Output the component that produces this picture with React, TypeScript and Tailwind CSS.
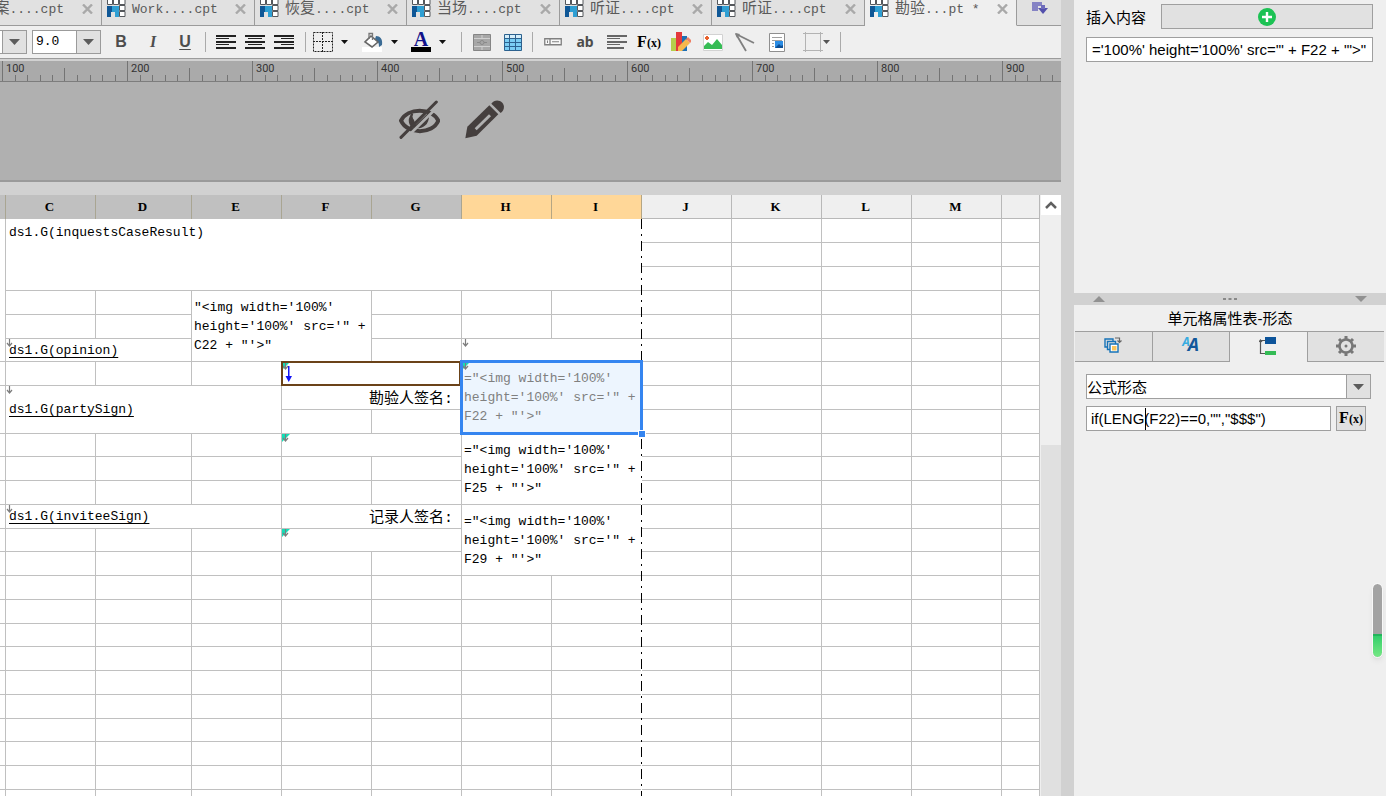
import { useState } from "react";
import type { ReactNode } from "react";
import clsx from "clsx";

/* ---------- data ---------- */

const tabs = [
  { cjk: "案", rest: "....cpt" },
  { cjk: "", rest: "Work....cpt" },
  { cjk: "恢复", rest: "....cpt" },
  { cjk: "当场", rest: "....cpt" },
  { cjk: "听证", rest: "....cpt" },
  { cjk: "听证", rest: "....cpt" },
  { cjk: "勘验", rest: "...pt *" },
];

const rulerMarks = [100, 200, 300, 400, 500, 600, 700, 800, 900];

const columns = ["", "C", "D", "E", "F", "G", "H", "I", "J", "K", "L", "M", ""];

type Cell = {
  span?: number;
  rows?: number;
  text?: string;
  kind?: "top" | "field" | "label" | "formula";
  mark?: "arrow" | "condition";
  state?: "selected" | "parent";
};

const blank = (n: number): Cell[] => Array.from({ length: n }, () => ({}));

const formula = (ref: string, prefix = "=") =>
  `${prefix}"<img width='100%'\nheight='100%' src='" +\n${ref} + "'>"`;

const rows: Cell[][] = [
  [{ rows: 6 }, { span: 7, rows: 3, text: "ds1.G(inquestsCaseResult)", kind: "top" }, ...blank(5)],
  blank(5),
  blank(5),
  [...blank(2), { span: 2, rows: 3, text: formula("C22", ""), kind: "formula" }, ...blank(8)],
  blank(10),
  [
    { span: 2, text: "ds1.G(opinion)", kind: "field", mark: "arrow" },
    {},
    { span: 2, mark: "arrow" },
    ...blank(5),
  ],
  [
    ...blank(4),
    { span: 2, mark: "condition", state: "parent" },
    { span: 2, rows: 3, text: formula("F22"), kind: "formula", mark: "condition", state: "selected" },
    ...blank(5),
  ],
  [
    { rows: 2 },
    { span: 3, rows: 2, text: "ds1.G(partySign)", kind: "field", mark: "arrow" },
    { span: 2, text: "勘验人签名:", kind: "label" },
    ...blank(5),
  ],
  blank(7),
  [
    ...blank(4),
    { span: 2, mark: "condition" },
    { span: 2, rows: 3, text: formula("F25"), kind: "formula" },
    ...blank(5),
  ],
  blank(11),
  blank(11),
  [
    {},
    { span: 3, text: "ds1.G(inviteeSign)", kind: "field", mark: "arrow" },
    { span: 2, text: "记录人签名:", kind: "label" },
    { span: 2, rows: 3, text: formula("F29"), kind: "formula" },
    ...blank(5),
  ],
  [...blank(4), { span: 2, mark: "condition" }, ...blank(5)],
  blank(11),
  ...Array.from({ length: 10 }, () => blank(13)),
];

/* ---------- small icons ---------- */

const ReportIcon = () => (
  <svg width="19" height="17" viewBox="0 0 19 17" className="shrink-0">
    <path d="M.5 0v4.5h5V0M6.500 0v4.500h5V0M12.500 0v4.500h5.500V0M12.500 5.500H18v5h-5.500zM12.500 11.500H18v5h-5.500z" fill="#fff" stroke="#55585c" />
    <path d="M0 6h12v11H8v-5H4v5H0z" fill="#0f5796" />
    <path d="M5 6h7v11H8v-5H5z" fill="#2f9fd3" />
  </svg>
);

const CloseIcon = () => (
  <svg width="11" height="10" viewBox="0 0 11 10" className="shrink-0">
    <path d="M1 .5l9 9M10 .5l-9 9" stroke="#a9a9a9" strokeWidth="2.4" />
  </svg>
);

const Caret = ({ fill = "#111" }: { fill?: string }) => (
  <svg width="7" height="4" viewBox="0 0 7 4" className="shrink-0">
    <path d="M0 0h7L3.500 4z" fill={fill} />
  </svg>
);

const AlignIcon = ({ lines, color = "#222" }: { lines: number[][]; color?: string }) => (
  <svg width="21" height="17" viewBox="0 0 21 17">
    {lines.map(([x, w], i) => (
      <rect key={i} x={x} y={i * 3 + 1} width={w} height={i % 2 ? 1 : 2} fill={color} />
    ))}
  </svg>
);

const BordersIcon = () => (
  <svg width="20" height="20" viewBox="0 0 20 20" fill="none" stroke="#222">
    <path d="M.5.5h19v19H.5z" strokeDasharray="2 1" />
    <path d="M9.500 0v20M0 9.500h20" strokeDasharray="2 1" />
  </svg>
);

const BucketIcon = () => (
  <svg width="21" height="20" viewBox="0 0 21 20">
    <rect y="15" width="20" height="5" fill="#fff" />
    <path d="M14 4c4 0 7 3 6 9l-3 2c0-4-1-6-4-8z" fill="#3a6b94" />
    <path d="M9 4l7 6-6 5-7-5z" fill="#fff" stroke="#666" strokeWidth="1.600" />
    <path d="M7 7V1.500h3.500V8" fill="none" stroke="#777" strokeWidth="1.300" />
  </svg>
);

const FontColorIcon = () => (
  <span className="flex h-5 w-5 flex-col items-center justify-between">
    <span className="h-[15px] font-['Liberation_Serif',serif] text-xl leading-[15px] font-bold text-[#12128a]">A</span>
    <span className="h-[5px] w-full bg-black" />
  </span>
);

const MergeIcon = () => (
  <svg width="18" height="17" viewBox="0 0 18 17">
    <path d="M.5.5h17v16H.5z" fill="#a7a7a7" stroke="#858585" />
    <path d="M1 4.500h16M1 12.500h16M9 1v3M9 13v3" stroke="#d0d0d0" />
    <path d="M4 8.500h3M11 8.500h3" stroke="#8a8a8a" />
    <circle cx="9" cy="8.500" r="2" fill="none" stroke="#8a8a8a" />
  </svg>
);

const GridIcon = () => (
  <svg width="18" height="17" viewBox="0 0 18 17">
    <path d="M.5.5h17v16H.5z" fill="#7bcdf3" stroke="#2d628f" />
    <path d="M1 1h16v3H1z" fill="#d5eefa" />
    <path d="M1 4.500h16M1 8.500h16M1 12.500h16M5.500 1v15M11.500 1v15" stroke="#2d628f" />
  </svg>
);

const TextFieldIcon = () => (
  <svg width="18" height="8" viewBox="0 0 18 8">
    <path d="M.75.75h16.500v6H.75zM6 1v6" fill="#f8f8f8" stroke="#808080" strokeWidth="1.300" />
    <path d="M8 3.750h7M3.500 2.500v2.500" stroke="#808080" />
  </svg>
);

const ChartIcon = () => (
  <svg width="20" height="20" viewBox="0 0 20 20">
    <path d="M0 6h6v13H0z" fill="#b5cf4b" />
    <path d="M11 4h5v15h-5z" fill="#1d6fb5" />
    <path d="M5 0h6v19H5z" fill="#e4393c" />
    <path d="M7 15l8-8 4 4-8 8H7z" fill="#f7b74d" />
    <path d="M15 7l2-2 4 4-2 2z" fill="#ee8065" />
  </svg>
);

const PictureIcon = () => (
  <svg width="20" height="17" viewBox="0 0 20 17">
    <path d="M.5.500h19v16H.5z" fill="#fff" stroke="#d2d2d2" />
    <path d="M1 15v-3l4-4 4 3 5-6 5 6v4z" fill="#36bc55" />
    <path d="M4 2v4M2 4h4" stroke="#e8622d" strokeWidth="2" />
  </svg>
);

const SlashIcon = () => (
  <svg width="20" height="19" viewBox="0 0 20 19" fill="none" stroke="#808080">
    <path d="M1 1l18 9M1 1l10 17" strokeWidth="1.800" />
    <path d="M0 0l5 1-3 4z" fill="#808080" stroke="none" />
  </svg>
);

const SubReportIcon = () => (
  <svg width="16" height="19" viewBox="0 0 16 19">
    <path d="M.5.5h15v18H.5z" fill="#fff" stroke="#8f8f8f" />
    <path d="M3 4.500h10M3 7.500h10M3 10.500h2M3 13.500h2" stroke="#a0a0a0" />
    <path d="M6 8h8v7H6z" fill="#2a8ce4" />
    <path d="M6 15l4-4 2 2 2-1v3z" fill="#0c4e94" />
  </svg>
);

const FrameIcon = () => (
  <svg width="20" height="20" viewBox="0 0 20 20" fill="none" stroke="#b3b3b3">
    <path d="M0 1.500h20M0 18.500h20M2.500 0v20M17.500 0v20" />
  </svg>
);

const FxLabel = () => (
  <span className="font-['Liberation_Serif',serif] text-base leading-none font-bold text-black">
    F<span className="text-xs">(x)</span>
  </span>
);

/* ---------- top bars ---------- */

function ReportTabs() {
  const [active, setActive] = useState(6);
  return (
    <div className="flex h-[26px] bg-[#e1e1e1] text-[#5a5a5a]">
      {tabs.map(({ cjk, rest }, i) => (
        <button
          key={i}
          onClick={() => setActive(i)}
          className={clsx(
            "flex shrink-0 items-center gap-1.5 overflow-hidden border-r border-b border-r-[#9b9b9b] pr-2 pb-2 pl-[5px] text-[13px] whitespace-pre",
            i === 0 ? "w-[102px] justify-end gap-[18px]" : "odd:w-[152px] even:w-[153px]",
            active === i ? "border-b-transparent bg-[#efefef]" : "border-b-[#9b9b9b]"
          )}
        >
          {i > 0 && <ReportIcon />}
          <span className={clsx("pt-1", i > 0 && "mr-auto")}>
            <span className="text-[15px]">{cjk}</span>
            {rest}
          </span>
          <CloseIcon />
        </button>
      ))}
      <button aria-label="More" className="flex flex-1 items-start border-b border-[#9b9b9b] pt-px pl-[15px]">
        <svg width="16" height="14" viewBox="0 0 16 14">
          <path d="M0 1h10v4H6v5H0z" fill="#8583c4" />
          <path d="M6 7h10l-5 6z" fill="#5350ac" />
          <path d="M9 4h4v4H9z" fill="#6e6bbb" />
        </svg>
      </button>
    </div>
  );
}

const Separator = () => (
  <span className="flex h-5 w-[9px] shrink-0 justify-center">
    <span className="w-px bg-[#aaa]" />
  </span>
);

function ToolButton({ label, size = "w-8", children }: { label: string; size?: string; children: ReactNode }) {
  return (
    <button aria-label={label} className={clsx("flex h-7 shrink-0 items-center justify-center", size)}>
      {children}
    </button>
  );
}

function DropButton({ label, children }: { label: string; children: ReactNode }) {
  return (
    <button aria-label={label} className="flex h-7 w-[49px] shrink-0 items-center gap-2 pl-[3px]">
      {children}
      <Caret />
    </button>
  );
}

function Toolbar() {
  return (
    <div className="flex h-[33px] items-center border-b border-[#9b9b9b] bg-[#efefef] text-[#4d4d4d]">
      <div className="relative mr-[5px] flex h-6 w-[27px] shrink-0 border-y border-r border-[#9b9b9b]">
        <select aria-label="Font" className="w-full appearance-none border-l-2 border-white bg-[#e1e1e1]">
          <option></option>
        </select>
        <span className="pointer-events-none absolute inset-y-0 right-0 left-[2px] flex items-center justify-center border-l border-[#9b9b9b]">
          <svg width="11" height="6" viewBox="0 0 11 6"><path d="M0 0h11L5.500 6z" fill="#5c5c5c" /></svg>
        </span>
      </div>
      <div className="relative flex h-6 w-[69px] shrink-0 border border-[#9b9b9b] bg-white">
        <select aria-label="Font size" className="w-full appearance-none pl-[3px] text-[13px] text-black">
          <option>9.0</option>
        </select>
        <span className="pointer-events-none absolute inset-y-0 right-0 flex w-6 items-center justify-center border-l border-[#9b9b9b] bg-[#e1e1e1]">
          <svg width="11" height="6" viewBox="0 0 11 6"><path d="M0 0h11L5.500 6z" fill="#5c5c5c" /></svg>
        </span>
      </div>
      <div className="flex pl-1 text-base">
        <ToolButton label="Bold"><b className="font-['Liberation_Sans',sans-serif]">B</b></ToolButton>
        <ToolButton label="Italic"><i className="font-['Liberation_Serif',serif] font-bold">I</i></ToolButton>
        <ToolButton label="Underline"><b className="font-['Liberation_Sans',sans-serif] underline underline-offset-2">U</b></ToolButton>
      </div>
      <Separator />
      <div className="flex px-0.5">
        <ToolButton label="Align left" size="w-[29px]"><AlignIcon lines={[[0, 20], [0, 13], [0, 20], [0, 13], [0, 20]]} /></ToolButton>
        <ToolButton label="Align center" size="w-[29px]"><AlignIcon lines={[[0, 20], [3, 14], [0, 20], [3, 14], [0, 20]]} /></ToolButton>
        <ToolButton label="Align right" size="w-[29px]"><AlignIcon lines={[[0, 20], [7, 13], [0, 20], [7, 13], [0, 20]]} /></ToolButton>
      </div>
      <Separator />
      <DropButton label="Borders"><BordersIcon /></DropButton>
      <DropButton label="Fill"><BucketIcon /></DropButton>
      <DropButton label="Font color"><FontColorIcon /></DropButton>
      <Separator />
      <ToolButton label="Merge" size="w-[31px]"><MergeIcon /></ToolButton>
      <ToolButton label="Unmerge" size="w-[31px]"><GridIcon /></ToolButton>
      <Separator />
      <ToolButton label="Text field"><TextFieldIcon /></ToolButton>
      <ToolButton label="Text">
        <b className="font-['Noto_Sans',sans-serif] text-sm">ab</b>
      </ToolButton>
      <ToolButton label="Rich text"><AlignIcon color="#666" lines={[[0, 20], [0, 13], [0, 20], [0, 13], [0, 17]]} /></ToolButton>
      <ToolButton label="Formula"><FxLabel /></ToolButton>
      <ToolButton label="Chart"><ChartIcon /></ToolButton>
      <ToolButton label="Image"><PictureIcon /></ToolButton>
      <ToolButton label="Slash"><SlashIcon /></ToolButton>
      <ToolButton label="Sub report"><SubReportIcon /></ToolButton>
      <button aria-label="Frame" className="flex h-7 shrink-0 items-center pr-1.5 pl-2.5">
        <FrameIcon />
        <Caret fill="#555" />
      </button>
      <Separator />
    </div>
  );
}

function Ruler() {
  return (
    <div className="mt-0.5 flex h-[21px] overflow-hidden border-b border-[#7d7d7d] bg-[#aaa] pl-0.5 font-[Roboto,sans-serif] text-[11px] text-[#333]">
      {rulerMarks.map((mark) => (
        <div key={mark} className="relative w-[125px] shrink-0 pl-1 leading-4">
          {mark}
          <svg width="125" height="20" viewBox="0 0 125 20" className="absolute top-0 left-0" stroke="#747474">
            <path d="M.5 0v20M62.500 7v13" />
            <path d="M13.500 14v6M25.500 14v6M38.500 14v6M50.500 14v6M75.500 14v6M88.500 14v6M100.500 14v6M113.500 14v6" />
          </svg>
        </div>
      ))}
    </div>
  );
}

function ParameterPane() {
  return (
    <div className="flex h-[100px] items-start gap-6 border-b-2 border-[#9a9a9a] bg-[#b0b0b0] pt-[18px] pl-[399px]">
      <button aria-label="Hide">
        <svg width="41" height="39" viewBox="57 44 123 117" fill="none" stroke="#453f3e" strokeLinecap="round">
          <path d="M63 106C82 66 156 66 175 106C158 148 82 148 63 106z" strokeWidth="12" />
          <path d="M96 88c-12 18-5 34 8 38l40-38c0 30-18 38-34 38" fill="#453f3e" strokeWidth="7" />
          <circle cx="107" cy="94" r="9" fill="#b0b0b0" stroke="none" />
          <path d="M72 164L184 54" stroke="#b0b0b0" strokeWidth="8" />
          <path d="M63 156L169 50" strokeWidth="9" />
        </svg>
      </button>
      <button aria-label="Edit">
        <svg width="41" height="39" viewBox="249 44 123 117" fill="#453f3e">
          <path d="M253 159l6-35 66-64 27 27-65 64z" />
          <path d="M331 55c9-13 24-12 33-3 8 10 6 23-5 31z" />
          <path d="M281 129l43-42 6 6-43 42z" fill="#b0b0b0" />
        </svg>
      </button>
    </div>
  );
}

/* ---------- sheet ---------- */

function CellMark({ type }: { type: "arrow" | "condition" }) {
  return (
    <svg width="8" height="8" viewBox="0 0 8 8" className="absolute top-0 left-0">
      {type === "condition" && <path d="M0 0h8L0 8z" fill="#12e0b8" />}
      <path d="M3.500 0v7M1 4l2.500 3L6 4" fill="none" stroke="#7d7d7d" strokeWidth="1.200" />
    </svg>
  );
}

function SheetCell({ cell }: { cell: Cell }) {
  const { span, rows: rowSpan, text, kind, mark, state } = cell;
  return (
    <td
      colSpan={span}
      rowSpan={rowSpan}
      className={clsx(
        "relative border-r border-b border-[#c0c0c0] px-0.5 leading-[19px]",
        kind === "top" && "pt-1 pl-[3px] align-top",
        kind === "field" && "pl-[3px] underline underline-offset-3",
        kind === "label" && "pt-[3px] pr-2 text-right text-[15px]",
        kind === "formula" && "whitespace-pre",
        state === "selected" && "bg-[#edf5fe] text-[#808080]"
      )}
    >
      {mark && <CellMark type={mark} />}
      {text}
      {state === "selected" && (
        <>
          <span className="absolute -inset-0.5 z-20 border-3 border-[#3585f0]" />
          <span className="absolute -right-1 -bottom-1 z-20 h-1.5 w-1.5 bg-[#3585f0] outline outline-white" />
        </>
      )}
      {state === "parent" && (
        <span className="absolute -inset-px right-0 border-2 border-[#6b4319]">
          <svg width="7" height="16" viewBox="0 0 7 16" className="absolute top-[3px] left-0.5">
            <path d="M3 0h1.500v10H7l-3.250 6L.5 10H3z" fill="#1414f5" />
          </svg>
        </span>
      )}
    </td>
  );
}

function Sheet() {
  return (
    <div className="flex min-h-0 flex-1 overflow-hidden">
      <div className="relative min-w-0 flex-1 overflow-hidden bg-white">
        <table className="w-full table-fixed border-separate border-spacing-0 text-[13px] text-black">
          <colgroup>
            <col className="w-[6px]" />
            <col className="w-[90px]" />
            <col className="w-[96px]" />
            {columns.slice(4).map((_, i) => (
              <col key={i} className="w-[90px]" />
            ))}
            <col />
          </colgroup>
          <thead>
            <tr className="h-6 font-['Liberation_Serif',serif]">
              {columns.map((name, i) => (
                <th
                  key={i}
                  className={clsx(
                    "border-r p-0 pr-0.5 font-bold",
                    i < 6 && "border-[#a9a592] bg-[#c0c0c0]",
                    (i === 6 || i === 7) && "border-[#b5a684] bg-[#ffd798]",
                    i > 7 && "border-b border-[#b8b8b8] bg-[#efefef]"
                  )}
                >
                  {name}
                </th>
              ))}
            </tr>
          </thead>
          <tbody>
            {rows.map((cells, i) => (
              <tr key={i} className="h-6 nth-[4n+6]:h-[23px]">
                {cells.map((cell, j) => (
                  <SheetCell key={j} cell={cell} />
                ))}
              </tr>
            ))}
          </tbody>
        </table>
        {/* page boundary */}
        <div className="absolute top-6 bottom-0 left-[641px] z-10 w-px bg-[repeating-linear-gradient(to_bottom,#000_0_10px,#fff_10px_15px,#000_15px_17px,#fff_17px_22px)]" />
      </div>
      <div className="flex w-[21px] shrink-0 flex-col bg-[#efefef] pl-px">
        <button aria-label="Scroll up" className="flex h-5 items-center justify-center bg-white">
          <svg width="12" height="8" viewBox="0 0 12 8">
            <path d="M1 7l5-5 5 5" fill="none" stroke="#606060" strokeWidth="2.500" />
          </svg>
        </button>
        <div className="mt-[230px] flex-1 bg-[#e0e0e0]" />
      </div>
    </div>
  );
}

/* ---------- property panel ---------- */

const CopyIcon = () => (
  <svg width="18" height="17" viewBox="0 0 18 17" fill="#e1e1e1" stroke="#1673b8" strokeWidth="1.400">
    <path d="M1 2h8v8H1z" />
    <path d="M3.500 4.500h8v8h-8z" />
    <path d="M6 7h8v8H6z" fill="#fff" />
    <path d="M8 9h4.500v4.500H8z" fill="#f8c45c" stroke="none" />
    <path d="M11 1h4.500v4M13.500 3.500l2 2 2-2" fill="none" stroke="#666" strokeWidth="1.200" />
  </svg>
);

const StyleIcon = () => (
  <span className="font-['Noto_Sans',sans-serif] font-bold italic">
    <span className="align-top text-xs leading-4 text-[#37abe0]">A</span>
    <span className="-ml-0.5 text-lg leading-5 text-[#12579a]">A</span>
  </span>
);

const PresentIcon = () => (
  <svg width="18" height="18" viewBox="0 0 18 18">
    <path d="M6 3.500H1.500v13H6M0 5l1.500-2L3 5" fill="none" stroke="#555" strokeWidth="1.200" />
    <path d="M6 0h11v7H6z" fill="#0d549a" />
    <path d="M6 14h11v4H6z" fill="#34bb55" />
  </svg>
);

const GearIcon = () => (
  <svg width="20" height="20" viewBox="0 0 20 20" fill="none" stroke="#777">
    <circle cx="10" cy="10" r="6.500" strokeWidth="2.600" />
    <circle cx="10" cy="10" r="1.500" fill="#777" stroke="none" />
    <path d="M10 0v3M10 17v3M0 10h3M17 10h3M3 3l2 2M15 15l2 2M17 3l-2 2M5 15l-2 2" strokeWidth="3" />
  </svg>
);

const panelTabs = [
  { label: "扩展", icon: <CopyIcon /> },
  { label: "样式", icon: <StyleIcon /> },
  { label: "形态", icon: <PresentIcon /> },
  { label: "其他", icon: <GearIcon /> },
];

function PropertyPanel() {
  const [active, setActive] = useState(2);
  const [content, setContent] = useState(`='100%' height='100%' src='" + F22 + "'>"`);
  const [expression, setExpression] = useState(`if(LENG(F22)==0,"","$$$")`);

  return (
    <aside className="flex w-[312px] shrink-0 flex-col bg-[#efefef] font-['Liberation_Sans','Noto_Sans_CJK_SC',sans-serif] text-[15px] text-black">
      <div className="flex h-[293px] flex-col gap-2 pt-1 pr-[13px] pl-3">
        <div className="flex h-[25px] items-center gap-[15px]">
          <label htmlFor="content" className="shrink-0 pt-1">插入内容</label>
          <button aria-label="Add" className="flex h-full flex-1 items-center justify-center border border-[#9f9f9f] bg-[#e1e1e1]">
            <svg width="18" height="18" viewBox="0 0 18 18">
              <circle cx="9" cy="9" r="9" fill="#1cc254" />
              <path d="M9 4v10M4 9h10" stroke="#fff" strokeWidth="2.400" />
            </svg>
          </button>
        </div>
        <input
          id="content"
          value={content}
          onChange={(e) => setContent(e.target.value)}
          className="h-[25px] w-full border border-[#9f9f9f] bg-white pl-[5px]"
        />
      </div>

      <div className="flex h-3 shrink-0 items-center justify-between bg-[#d1d1d1] pr-[19px] pl-[19px]">
        <svg width="12" height="6" viewBox="0 0 12 6"><path d="M0 6h12L6 0z" fill="#919191" /></svg>
        <svg width="14" height="2" viewBox="0 0 14 2"><path d="M0 1h3M5.500 1h3M11 1h3" stroke="#888" strokeWidth="2" /></svg>
        <svg width="12" height="6" viewBox="0 0 12 6"><path d="M0 0h12L6 6z" fill="#919191" /></svg>
      </div>

      <h2 className="h-[26px] pt-px text-center leading-[26px]">单元格属性表-形态</h2>
      <div className="mr-0.5 ml-px flex h-[31px] border-t border-[#9f9f9f]">
        {panelTabs.map(({ label, icon }, i) => (
          <button
            key={label}
            aria-label={label}
            onClick={() => setActive(i)}
            className={clsx(
              "flex flex-1 items-center justify-center border-[#9f9f9f] pb-0.5",
              i < 3 && "border-r",
              active === i ? "bg-[#efefef]" : "border-b bg-[#e1e1e1]"
            )}
          >
            {icon}
          </button>
        ))}
      </div>

      <div className="flex flex-col gap-[7px] pt-3 pr-[15px] pl-3">
        <div className="relative h-[25px] border border-[#9f9f9f] bg-white">
          <select aria-label="形态" className="h-full w-full appearance-none pt-0.5">
            <option>公式形态</option>
          </select>
          <span className="pointer-events-none absolute inset-y-0 right-0 flex w-6 items-center justify-center border-l border-[#9f9f9f] bg-[#e1e1e1]">
            <svg width="11" height="6" viewBox="0 0 11 6"><path d="M0 0h11L5.500 6z" fill="#5c5c5c" /></svg>
          </span>
        </div>
        <div className="flex h-[25px] gap-[5px] pr-[5px]">
          <div className="relative min-w-0 flex-1">
            <input
              aria-label="公式"
              value={expression}
              onChange={(e) => setExpression(e.target.value)}
              className="h-full w-full border border-[#9f9f9f] bg-white pl-1"
            />
            <span className="absolute top-0.5 bottom-px left-[59px] w-px bg-black" />
          </div>
          <button aria-label="Formula editor" className="flex w-[30px] items-center justify-center border border-[#9f9f9f] bg-[#e1e1e1]">
            <FxLabel />
          </button>
        </div>
      </div>
    </aside>
  );
}

export default function App() {
  return (
    <div className="relative flex h-screen overflow-hidden bg-[#d1d1d1] font-['Liberation_Mono','Noto_Sans_CJK_SC',monospace]">
      <main className="flex min-w-0 flex-1 flex-col">
        <ReportTabs />
        <Toolbar />
        <Ruler />
        <ParameterPane />
        <div className="h-[13px] shrink-0" />
        <Sheet />
      </main>
      <div className="w-[13px] shrink-0" />
      <PropertyPanel />

      {/* floating volume indicator */}
      <div className="absolute top-[584px] right-1 flex h-[73px] w-[9px] flex-col overflow-hidden rounded-full bg-[#a3a3a3] shadow-md outline outline-[#f8f8f8]">
        <div className="mt-[50px] flex-1 border-t-2 border-[#22b55b] bg-linear-to-b from-[#30cf6b] to-[#74e884]" />
      </div>
    </div>
  );
}
